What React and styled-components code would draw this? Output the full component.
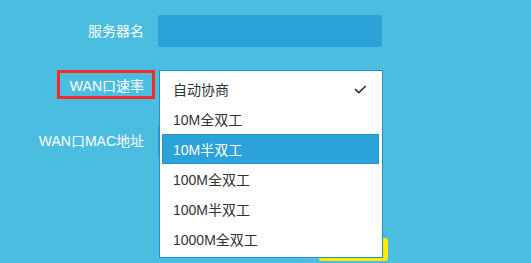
import React from "react"
import styled, { createGlobalStyle } from "styled-components"

const GlobalStyle = createGlobalStyle`
  html, body {
    margin: 0;
    padding: 0;
    background: #4bbde0;
    font-family: "Liberation Sans", "Noto Sans CJK SC", sans-serif;
    font-size: 14px;
  }
`

const Page = styled.div`
  width: 531px;
  height: 263px;
  overflow: hidden;
  padding-top: 15px;
  box-sizing: border-box;
`

const Form = styled.div`
  display: grid;
  grid-template-columns: 144px 224px;
  column-gap: 14px;
  row-gap: 23px;
  grid-auto-rows: 32px;
`

const Label = styled.div`
  display: flex;
  align-items: center;
  justify-content: flex-end;
  color: #ffffff;
  white-space: nowrap;
`

const LabelText = styled.span`
  position: relative;
  display: inline-block;
  line-height: 20px;

  ${props => props.$marked && `
    &::after {
      content: "";
      position: absolute;
      top: -6px;
      bottom: -3px;
      left: -13px;
      right: -11px;
      border: 3px solid #f22b2b;
    }
  `}
`

const Field = styled.div`
  position: relative;
  height: 32px;
  background: #2ba3d8;
  border-radius: 2px;
`

const SelectCell = styled.div`
  position: relative;
  margin-left: 1px;
`

const Menu = styled.ul`
  position: absolute;
  top: 0;
  left: 0;
  z-index: 10;
  width: 224px;
  margin: 0;
  padding: 3px 3px 3px 2px;
  box-sizing: border-box;
  list-style: none;
  background: #ffffff;
  border: 1px solid #2290cf;
`

const Option = styled.li`
  display: flex;
  align-items: center;
  justify-content: space-between;
  height: 30px;
  padding: 0 10px 0 10px;
  box-sizing: border-box;
  border: 1px solid ${props => (props.$active ? "#2294d0" : "transparent")};
  background: ${props => (props.$active ? "#2ba3d8" : "transparent")};
  color: ${props => (props.$active ? "#ffffff" : "#333333")};
  white-space: nowrap;
`

const ButtonRow = styled.div`
  grid-column: 2;
  margin-top: 58px;
`

const SaveButton = styled.div`
  margin-left: 161px;
  width: 69px;
  height: 23px;
  background: #ffea00;
  border-radius: 3px;
`

const Check = () => (
  <svg width="13" height="9" viewBox="0 0 13 9" style={{ marginRight: 1 }}>
    <path d="M1 4.2 L4.8 7.6 L11.8 1" fill="none" stroke="#333" strokeWidth="1.7" />
  </svg>
)

const options = ["自动协商", "10M全双工", "10M半双工", "100M全双工", "100M半双工", "1000M全双工"]

export default function App() {
  return (
    <Page>
      <GlobalStyle />
      <Form>
        <Label>
          <LabelText>服务器名</LabelText>
        </Label>
        <Field />

        <Label>
          <LabelText $marked>WAN口速率</LabelText>
        </Label>
        <SelectCell>
          <Menu>
            {options.map((o, i) => (
              <Option key={o} $active={i === 2}>
                <span>{o}</span>
                {i === 0 && <Check />}
              </Option>
            ))}
          </Menu>
        </SelectCell>

        <Label>
          <LabelText>WAN口MAC地址</LabelText>
        </Label>
        <Field />

        <ButtonRow>
          <SaveButton />
        </ButtonRow>
      </Form>
    </Page>
  )
}
